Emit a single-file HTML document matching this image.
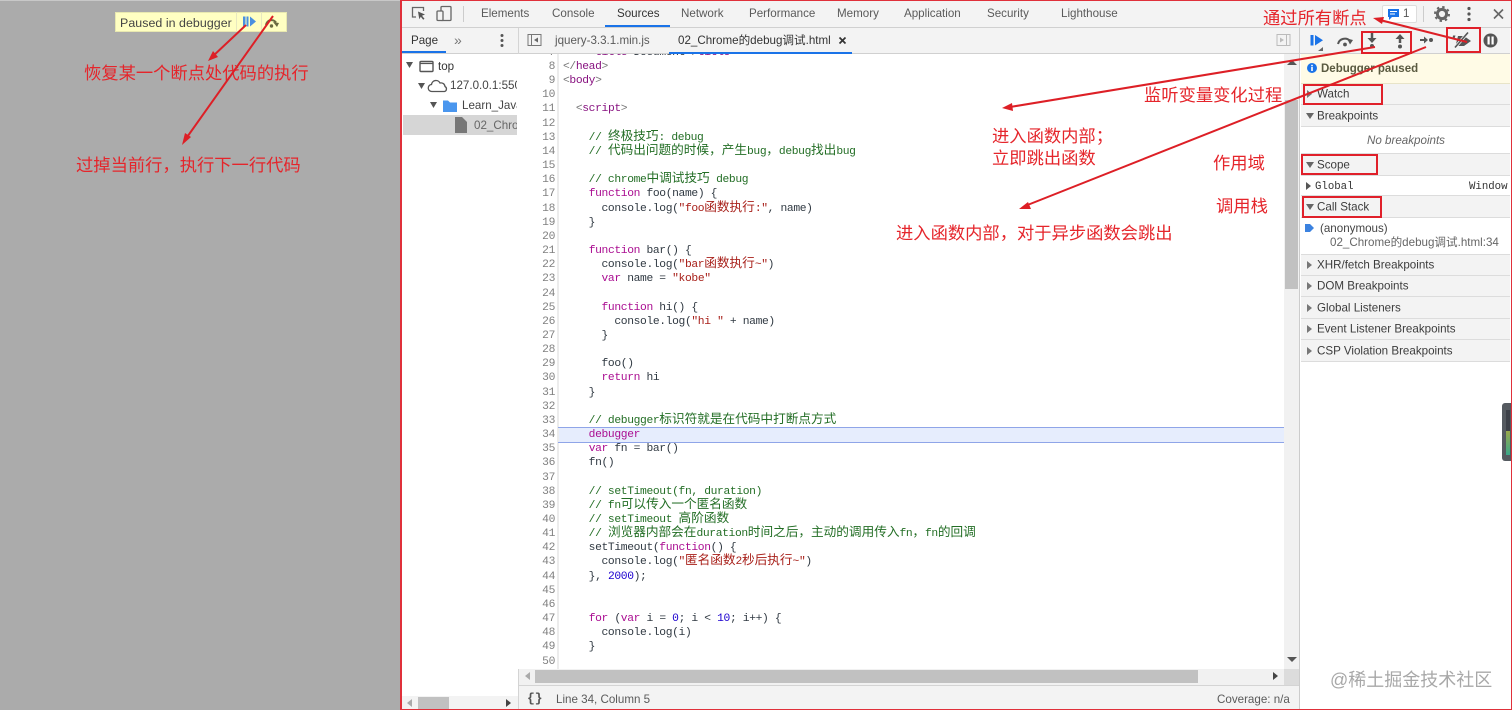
<!DOCTYPE html>
<html lang="zh">
<head>
<meta charset="utf-8">
<style>
html,body{margin:0;padding:0;width:1512px;height:710px;overflow:hidden;background:#fff;font-family:"Liberation Sans","Noto Sans CJK SC",sans-serif}
#root{position:absolute;left:0;top:0;width:1512px;height:710px;overflow:hidden;filter:blur(.3px)}
.a{position:absolute;white-space:nowrap}
.t{position:absolute;white-space:nowrap;font-size:11.6px;line-height:14px;color:#5a5a5a;transform:translateY(-50%)}
.r{position:absolute;white-space:nowrap;font-size:17.3px;line-height:20px;color:#e5252b;transform:translateY(-50%);font-family:"Noto Sans CJK SC","Liberation Sans",sans-serif}
.b{position:absolute;background:#f3f3f3;left:1301px;width:209px;border-bottom:1px solid #dcdcdc;box-sizing:border-box;font-size:11.6px;color:#3c3c3c}
.b span{position:absolute;left:16px;top:50%;transform:translateY(-50%);white-space:nowrap}
.tri{position:absolute;left:5px;top:50%;margin-top:-4px;width:0;height:0}
.dn{border-left:4px solid transparent;border-right:4px solid transparent;border-top:6px solid #666;margin-top:-3px}
.rt{border-top:4px solid transparent;border-bottom:4px solid transparent;border-left:5px solid #777;left:6px}
#code{position:absolute;left:518px;top:54px;width:766px;height:615px;overflow:hidden;background:#fff}
#in{position:absolute;left:0;top:-8.17px;width:766px;font-family:"Liberation Mono","Noto Sans CJK SC",monospace;font-size:11.3px;letter-spacing:-.36px;line-height:14.17px;color:#303942}
.l{height:14.17px;position:relative;white-space:pre;padding-left:45px}
.l b{position:absolute;left:0;width:37px;text-align:right;font-weight:400;color:#808080}
i{font-style:normal;font-size:12.65px;letter-spacing:0;line-height:0;font-family:"Noto Sans CJK SC",sans-serif}
.c{color:#236e25}.k{color:#aa0d91}.s{color:#a8201a}.g{color:#881280}.n{color:#1c00cf}.h{color:#777}
.rb{position:absolute;border:2px solid #e0202a;box-sizing:border-box}
</style>
</head>
<body>
<div id="root">
<!-- left page -->
<div class="a" style="left:0;top:0;width:400px;height:710px;background:#ababab;border-top:1px solid #c8c8c8;box-sizing:border-box"></div>
<div class="a" style="left:115px;top:12px;width:172px;height:20px;background:#ffffc2;border:1px solid #e8e8b0;box-sizing:border-box"></div>
<div class="a" style="left:236px;top:12px;width:1px;height:20px;background:#e8e8c0"></div>
<div class="a" style="left:261px;top:12px;width:1px;height:20px;background:#e8e8c0"></div>
<div class="t" style="left:120px;top:22.5px;font-size:12.4px;color:#444;letter-spacing:.05px">Paused in debugger</div>
<svg class="a" style="left:240px;top:13px" width="48" height="18" viewBox="0 0 48 18">
<rect x="3" y="3.5" width="2.5" height="10" fill="#4a90e0"/><rect x="6.5" y="3.5" width="2" height="10" fill="#4a90e0"/><path d="M10 3.5l6 5-6 5z" fill="#4a90e0"/>
<path d="M26 12a5.5 5.5 0 0 1 10-2.5" fill="none" stroke="#6a6a40" stroke-width="2"/><path d="M33 9l6 1-2 4z" fill="#6a6a40"/><circle cx="31.5" cy="13" r="1.7" fill="#6a6a40"/>
</svg>
<div class="r" style="left:84px;top:72px">恢复某一个断点处代码的执行</div>
<div class="r" style="left:76px;top:163.5px">过掉当前行，执行下一行代码</div>

<!-- top toolbar -->
<div class="a" style="left:401px;top:0;width:1111px;height:28px;background:#f3f3f3;border-bottom:1px solid #d0d0d0;box-sizing:border-box"></div>
<svg class="a" style="left:410px;top:5px" width="44" height="18" viewBox="0 0 44 18" fill="none" stroke="#666" stroke-width="1.3">
<path d="M6 12H2.5V2.5h11V6"/><path d="M8 6.5l7 3-3 1.2 2.5 3-1.3 1-2.4-3-1.5 2.5z" fill="#555" stroke="none"/>
<rect x="31" y="1.5" width="10" height="14" rx="1"/><rect x="27" y="6" width="6" height="9.5" rx="1" fill="#f3f3f3"/>
</svg>
<div class="a" style="left:463px;top:6px;width:1px;height:16px;background:#ccc"></div>
<div class="t" style="left:481px;top:14px">Elements</div>
<div class="t" style="left:552px;top:14px">Console</div>
<div class="t" style="left:617px;top:14px;color:#333">Sources</div>
<div class="a" style="left:605px;top:25px;width:65px;height:2px;background:#1a73e8"></div>
<div class="t" style="left:681px;top:14px">Network</div>
<div class="t" style="left:749px;top:14px">Performance</div>
<div class="t" style="left:837px;top:14px">Memory</div>
<div class="t" style="left:904px;top:14px">Application</div>
<div class="t" style="left:987px;top:14px">Security</div>
<div class="t" style="left:1061px;top:14px">Lighthouse</div>
<div class="a" style="left:1382px;top:5px;width:35px;height:18px;background:#fff;border:1px solid #ddd;border-radius:2px;box-sizing:border-box"></div>
<svg class="a" style="left:1387px;top:8px" width="26" height="13" viewBox="0 0 26 13"><path d="M1 1h11v8H5l-3 3V9H1z" fill="#1a73e8"/><path d="M3 3.5h7M3 6h5" stroke="#fff"/></svg>
<div class="t" style="left:1403px;top:14px;font-size:11.5px;color:#555">1</div>
<div class="a" style="left:1423px;top:6px;width:1px;height:16px;background:#ccc"></div>
<svg class="a" style="left:1433px;top:5px" width="72" height="18" viewBox="0 0 72 18">
<circle cx="9" cy="9" r="4.6" fill="none" stroke="#666" stroke-width="3"/><circle cx="9" cy="9" r="7" fill="none" stroke="#666" stroke-width="2" stroke-dasharray="2.4 3.1"/>
<circle cx="36" cy="3.5" r="1.6" fill="#555"/><circle cx="36" cy="9" r="1.6" fill="#555"/><circle cx="36" cy="14.5" r="1.6" fill="#555"/>
<path d="M61 4.5l9 9m0-9l-9 9" stroke="#666" stroke-width="1.6" fill="none"/>
</svg>

<!-- second row -->
<div class="a" style="left:402px;top:28px;width:1108px;height:26px;background:#f3f3f3;border-bottom:1px solid #d0d0d0;box-sizing:border-box"></div>
<div class="t" style="left:411px;top:41px;color:#333">Page</div>
<div class="a" style="left:402px;top:51px;width:44px;height:2px;background:#1a73e8"></div>
<div class="t" style="left:454px;top:39.5px;font-size:14px;color:#777">»</div>
<svg class="a" style="left:498px;top:33px" width="8" height="15"><circle cx="4" cy="2.5" r="1.5" fill="#555"/><circle cx="4" cy="7.5" r="1.5" fill="#555"/><circle cx="4" cy="12.5" r="1.5" fill="#555"/></svg>
<svg class="a" style="left:527px;top:33px" width="16" height="15" fill="none" stroke="#777"><rect x="1" y="1.5" width="13" height="11"/><path d="M4.5 1.5v11"/><path d="M11 4.5v5l-4-2.5z" fill="#666" stroke="none"/></svg>
<div class="t" style="left:555px;top:41px">jquery-3.3.1.min.js</div>
<div class="t" style="left:678px;top:41px;color:#333">02_Chrome的debug调试.html</div>
<svg class="a" style="left:838px;top:36px" width="10" height="10"><path d="M1.5 1.5l6 6m0-6l-6 6" stroke="#333" stroke-width="1.7"/></svg>
<div class="a" style="left:669px;top:51.5px;width:183px;height:2px;background:#1a73e8"></div>
<svg class="a" style="left:1276px;top:33px" width="16" height="15" fill="none" stroke="#bbb"><rect x="1" y="1.5" width="13" height="11"/><path d="M10.5 1.5v11"/><path d="M4 4.5v5l4-2.5z" fill="#bbb" stroke="none"/></svg>
<svg class="a" style="left:1308px;top:30px" width="190" height="24" viewBox="0 0 190 24">
<rect x="2.500" y="5" width="3" height="10.500" fill="#1a73e8"/><path d="M7 5l8 5.250-8 5.250z" fill="#1a73e8"/><path d="M10 21l5-4v4z" fill="#666"/>
<path d="M30 14a7 7 0 0 1 12-3" fill="none" stroke="#555" stroke-width="2"/><path d="M39 8.500l6 1.500-3 4.500z" fill="#555"/><circle cx="37" cy="14.500" r="1.900" fill="#555"/>
<path d="M64 3v6" stroke="#555" stroke-width="2.500"/><path d="M59.500 8h9L64 13z" fill="#555"/><circle cx="64" cy="16" r="2" fill="#555"/>
<path d="M92 13V8" stroke="#555" stroke-width="2.500"/><path d="M87.500 9h9L92 4z" fill="#555"/><circle cx="92" cy="16.500" r="2" fill="#555"/>
<path d="M112 10h6" stroke="#555" stroke-width="2"/><path d="M116 6.500l4 3.500-4 3.500z" fill="#555"/><circle cx="123" cy="10" r="2" fill="#555"/>
<path d="M145 5.500h2.500l-1 3h-2zM150 6h6l7 5-7 5h-8.500z" fill="#555"/><path d="M147 17.500L160 2.500" stroke="#f3f3f3" stroke-width="3.200"/><path d="M147 17.500L160 2.500" stroke="#555" stroke-width="1.600"/>
<circle cx="182.500" cy="10.500" r="7" fill="#555"/><rect x="179.500" y="6.500" width="2.200" height="8" fill="#fff"/><rect x="183.500" y="6.500" width="2.200" height="8" fill="#fff"/>
</svg>
<div class="a" style="left:518px;top:28px;width:1px;height:682px;background:#d4d4d4"></div>
<div class="a" style="left:1299px;top:28px;width:1px;height:682px;background:#ccc"></div>

<!-- tree -->
<div class="a" style="left:403px;top:115px;width:114px;height:20px;background:#d6d6d6"></div>
<svg class="a" style="left:403px;top:55px" width="114" height="80" viewBox="0 0 114 80">
<path d="M3 7h7l-3.500 6z" fill="#555"/>
<rect x="17" y="6.500" width="13" height="10" rx="1" fill="none" stroke="#555" stroke-width="1.400"/><path d="M17 8.500h13" stroke="#555" stroke-width="1.200"/>
<path d="M15 28h7l-3.500 6z" fill="#555"/>
<path d="M29 36.500a3.500 3.500 0 0 1-.5-7 4.500 4.500 0 0 1 8.500-1.500 4 4 0 0 1 5 3.500 2.700 2.700 0 0 1-.5 5z" fill="none" stroke="#555" stroke-width="1.300"/>
<path d="M27 47h7l-3.500 6z" fill="#555"/>
<path d="M40 45.500h5l2 2h7v9.500H40z" fill="#4a96ee"/>
<path d="M52 62h7l5 5v11H52z" fill="#777"/>
</svg>
<div class="t" style="left:438px;top:67px;color:#333">top</div>
<div class="t" style="left:450px;top:86px;width:67px;overflow:hidden;color:#444">127.0.0.1:5500</div>
<div class="t" style="left:462px;top:106px;width:55px;overflow:hidden;color:#444">Learn_JavaScript</div>
<div class="t" style="left:474px;top:125.5px;width:43px;overflow:hidden;color:#666">02_Chrome</div>

<!-- left h scrollbar -->
<div class="a" style="left:402px;top:696px;width:116px;height:13px;background:#f3f3f3"></div>
<div class="a" style="left:418px;top:697px;width:31px;height:12px;background:#c1c1c1"></div>
<div class="a" style="left:407px;top:699px;border-top:4px solid transparent;border-bottom:4px solid transparent;border-right:5px solid #aaa"></div>
<div class="a" style="left:506px;top:699px;border-top:4px solid transparent;border-bottom:4px solid transparent;border-left:5px solid #444"></div>

<!-- code -->
<div id="code"><div id="in">
<div class="l"><b>7</b>    <span class="h">&lt;</span><span class="g">title</span><span class="h">&gt;</span>Document<span class="h">&lt;/</span><span class="g">title</span><span class="h">&gt;</span></div>
<div class="l"><b>8</b><span class="h">&lt;/</span><span class="g">head</span><span class="h">&gt;</span></div>
<div class="l"><b>9</b><span class="h">&lt;</span><span class="g">body</span><span class="h">&gt;</span></div>
<div class="l"><b>10</b></div>
<div class="l"><b>11</b>  <span class="h">&lt;</span><span class="g">script</span><span class="h">&gt;</span></div>
<div class="l"><b>12</b></div>
<div class="l c"><b>13</b>    // <i>终极技巧</i>: debug</div>
<div class="l c"><b>14</b>    // <i>代码出问题的时候，产生</i>bug<i>，</i>debug<i>找出</i>bug</div>
<div class="l"><b>15</b></div>
<div class="l c"><b>16</b>    // chrome<i>中调试技巧</i> debug</div>
<div class="l"><b>17</b>    <span class="k">function</span> foo(name) {</div>
<div class="l"><b>18</b>      console.log(<span class="s">"foo<i>函数执行</i>:"</span>, name)</div>
<div class="l"><b>19</b>    }</div>
<div class="l"><b>20</b></div>
<div class="l"><b>21</b>    <span class="k">function</span> bar() {</div>
<div class="l"><b>22</b>      console.log(<span class="s">"bar<i>函数执行</i>~"</span>)</div>
<div class="l"><b>23</b>      <span class="k">var</span> name = <span class="s">"kobe"</span></div>
<div class="l"><b>24</b></div>
<div class="l"><b>25</b>      <span class="k">function</span> hi() {</div>
<div class="l"><b>26</b>        console.log(<span class="s">"hi "</span> + name)</div>
<div class="l"><b>27</b>      }</div>
<div class="l"><b>28</b></div>
<div class="l"><b>29</b>      foo()</div>
<div class="l"><b>30</b>      <span class="k">return</span> hi</div>
<div class="l"><b>31</b>    }</div>
<div class="l"><b>32</b></div>
<div class="l c"><b>33</b>    // debugger<i>标识符就是在代码中打断点方式</i></div>
<div class="l" style="background:linear-gradient(90deg,#fff 40px,#e6edfd 40px)"><b>34</b><span class="k">    debugger</span></div>
<div class="l"><b>35</b>    <span class="k">var</span> fn = bar()</div>
<div class="l"><b>36</b>    fn()</div>
<div class="l"><b>37</b></div>
<div class="l c"><b>38</b>    // setTimeout(fn, duration)</div>
<div class="l c"><b>39</b>    // fn<i>可以传入一个匿名函数</i></div>
<div class="l c"><b>40</b>    // setTimeout <i>高阶函数</i></div>
<div class="l c"><b>41</b>    // <i>浏览器内部会在</i>duration<i>时间之后，主动的调用传入</i>fn<i>，</i>fn<i>的回调</i></div>
<div class="l"><b>42</b>    setTimeout(<span class="k">function</span>() {</div>
<div class="l"><b>43</b>      console.log(<span class="s">"<i>匿名函数</i>2<i>秒后执行</i>~"</span>)</div>
<div class="l"><b>44</b>    }, <span class="n">2000</span>);</div>
<div class="l"><b>45</b></div>
<div class="l"><b>46</b></div>
<div class="l"><b>47</b>    <span class="k">for</span> (<span class="k">var</span> i = <span class="n">0</span>; i &lt; <span class="n">10</span>; i++) {</div>
<div class="l"><b>48</b>      console.log(i)</div>
<div class="l"><b>49</b>    }</div>
<div class="l"><b>50</b></div>
</div>
<div class="a" style="left:39px;top:0;width:2px;height:615px;background:#ececec"></div>
<div class="a" style="left:40px;top:373px;width:726px;height:1px;background:#8fa5e8"></div>
<div class="a" style="left:40px;top:388px;width:726px;height:1px;background:#8fa5e8"></div>
</div>

<!-- editor scrollbars -->
<div class="a" style="left:1284px;top:54px;width:15px;height:615px;background:#f1f1f1"></div>
<div class="a" style="left:1285px;top:100px;width:13px;height:189px;background:#c1c1c1"></div>
<div class="a" style="left:1287px;top:60px;border-left:5px solid transparent;border-right:5px solid transparent;border-bottom:5px solid #555"></div>
<div class="a" style="left:1287px;top:657px;border-left:5px solid transparent;border-right:5px solid transparent;border-top:5px solid #555"></div>
<div class="a" style="left:519px;top:669px;width:780px;height:16px;background:#f1f1f1"></div>
<div class="a" style="left:535px;top:670px;width:663px;height:13px;background:#c1c1c1"></div>
<div class="a" style="left:525px;top:672px;border-top:4px solid transparent;border-bottom:4px solid transparent;border-right:5px solid #aaa"></div>
<div class="a" style="left:1273px;top:672px;border-top:4px solid transparent;border-bottom:4px solid transparent;border-left:5px solid #444"></div>
<div class="a" style="left:1284px;top:669px;width:15px;height:16px;background:#dcdcdc"></div>

<!-- status bar -->
<div class="a" style="left:519px;top:685px;width:780px;height:24px;background:#f3f3f3;border-top:1px solid #d4d4d4;box-sizing:border-box"></div>
<div class="t" style="left:527px;top:699px;font-size:13px;font-weight:700;color:#555;font-family:'Liberation Mono',monospace">{}</div>
<div class="t" style="left:556px;top:699.5px">Line 34, Column 5</div>
<div class="t" style="left:1217px;top:699.5px">Coverage: n/a</div>

<!-- debugger side panel -->
<div class="a" style="left:1301px;top:54px;width:209px;height:30px;background:#fffbe6;border-bottom:1px solid #e8e4c8;box-sizing:border-box"></div>
<svg class="a" style="left:1306px;top:62px" width="12" height="12"><circle cx="6" cy="6" r="5" fill="#1a73e8"/><rect x="5.2" y="5" width="1.6" height="4" fill="#fff"/><rect x="5.2" y="2.8" width="1.6" height="1.5" fill="#fff"/></svg>
<div class="t" style="left:1321px;top:68.5px;font-weight:700;font-size:11.5px;color:#5a5a40">Debugger paused</div>

<div class="b" style="top:84px;height:21px"><div class="tri rt"></div><span>Watch</span></div>
<div class="b" style="top:105px;height:22px"><div class="tri dn"></div><span>Breakpoints</span></div>
<div class="t" style="left:1367px;top:140.5px;font-style:italic;color:#666">No breakpoints</div>
<div class="a" style="left:1301px;top:153px;width:209px;height:1px;background:#dcdcdc"></div>
<div class="b" style="top:154px;height:22px"><div class="tri dn"></div><span>Scope</span></div>
<div class="a" style="left:1306px;top:182px;border-top:4px solid transparent;border-bottom:4px solid transparent;border-left:5px solid #555"></div>
<div class="t" style="left:1315px;top:186.5px;font-family:'Liberation Mono',monospace;font-size:10.7px;color:#333">Global</div>
<div class="t" style="left:1469px;top:186.5px;font-family:'Liberation Mono',monospace;font-size:10.7px;color:#333">Window</div>
<div class="a" style="left:1301px;top:195px;width:209px;height:1px;background:#dcdcdc"></div>
<div class="b" style="top:196px;height:22px"><div class="tri dn"></div><span>Call Stack</span></div>
<svg class="a" style="left:1305px;top:223px" width="10" height="10"><path d="M0 1h5l4 4-4 4H0z" fill="#3b82e0"/></svg>
<div class="t" style="left:1320px;top:229px;color:#444">(anonymous)</div>
<div class="t" style="left:1330px;top:243px;color:#666">02_Chrome的debug调试.html:34</div>
<div class="b" style="top:254px;height:22px;border-top:1px solid #dcdcdc"><div class="tri rt"></div><span>XHR/fetch Breakpoints</span></div>
<div class="b" style="top:276px;height:21px"><div class="tri rt"></div><span>DOM Breakpoints</span></div>
<div class="b" style="top:297px;height:22px"><div class="tri rt"></div><span>Global Listeners</span></div>
<div class="b" style="top:319px;height:21px"><div class="tri rt"></div><span>Event Listener Breakpoints</span></div>
<div class="b" style="top:340px;height:22px"><div class="tri rt"></div><span>CSP Violation Breakpoints</span></div>

<!-- watermark & edge widget -->
<div class="a" style="left:1330px;top:668px;font-size:18px;line-height:24px;color:#a8a8a8">@稀土掘金技术社区</div>
<div class="a" style="left:1502px;top:403px;width:9px;height:58px;background:#555a60;border-radius:3px 0 0 3px"></div>
<div class="a" style="left:1506px;top:410px;width:4px;height:24px;background:#3c4048"></div>
<div class="a" style="left:1506px;top:431px;width:4px;height:24px;background:linear-gradient(#9aa84a,#3aa88a)"></div>

<!-- red frame -->
<div class="a" style="left:400px;top:0;width:1112px;height:710px;border:1px solid #e0303a;box-sizing:border-box;border-left-width:2px"></div>

<!-- annotations -->
<div class="rb" style="left:1361px;top:31px;width:51px;height:23px"></div>
<div class="rb" style="left:1446px;top:27px;width:35px;height:26px"></div>
<div class="rb" style="left:1303px;top:84px;width:80px;height:21px"></div>
<div class="rb" style="left:1301px;top:154px;width:77px;height:21px"></div>
<div class="rb" style="left:1302px;top:196px;width:80px;height:22px"></div>
<div class="r" style="left:1263px;top:17px">通过所有断点</div>
<div class="r" style="left:1144px;top:94px">监听变量变化过程</div>
<div class="r" style="left:992px;top:135px">进入函数内部；</div>
<div class="r" style="left:992px;top:157px">立即跳出函数</div>
<div class="r" style="left:1213px;top:162px">作用域</div>
<div class="r" style="left:1216px;top:205px">调用栈</div>
<div class="r" style="left:896px;top:232px">进入函数内部，对于异步函数会跳出</div>
<svg class="a" style="left:0;top:0" width="1512" height="710" viewBox="0 0 1512 710">
<g stroke="#dd1f26" stroke-width="2" fill="none">
<path d="M246 25L212 57"/><path d="M273 16L185 140"/><path d="M1375 47L1010 107"/><path d="M1426 47L1025 206"/><path d="M1467 42L1380 20"/>
</g>
<g fill="#dd1f26">
<path d="M208 61l5-10 5 6z"/><path d="M182 145l3-12 6 4z"/><path d="M1002 108l10-5 1 8z"/><path d="M1019 209l9-7 3 7z"/><path d="M1373 18l11-1-2 7z"/>
</g>
</svg>
</div>
</body>
</html>
